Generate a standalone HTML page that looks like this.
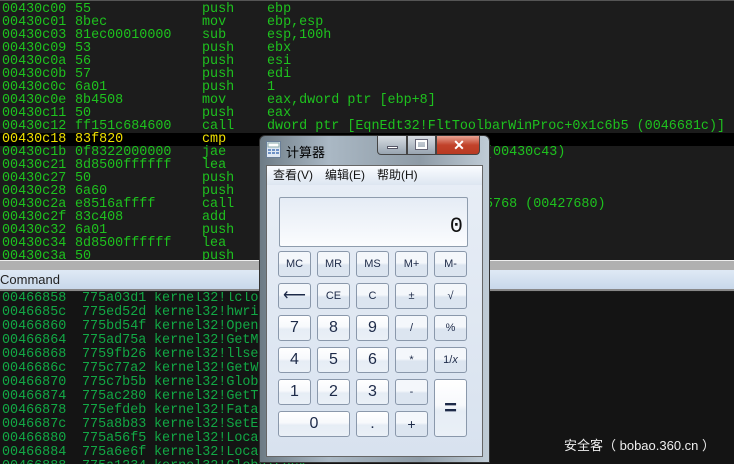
<!DOCTYPE html>
<html style="overflow:hidden;width:734px;height:464px"><head><meta charset="utf-8"><style>
*{margin:0;padding:0;box-sizing:border-box}
body{width:734px;height:464px;overflow:hidden;background:#1a1a1a;position:relative;font-family:"Liberation Mono",monospace}
#top{position:absolute;left:0;top:0;width:734px;height:260px;background:#1c1c1c;border-top:1px solid #555}
.r{position:absolute;left:0;height:13px;width:734px;font-size:13.4px;line-height:13px;color:#1ec21e;white-space:pre}
.r span{position:absolute;top:0}
.hl{background:#000;color:#f0e000}
#sep{position:absolute;left:0;top:260px;width:734px;height:10px;background:#b0b0b0;border-top:1px solid #eee}
#cmd{position:absolute;left:0;top:270px;width:734px;height:21px;background:linear-gradient(#dfe9f5,#c8d8ea);border-bottom:2px solid #888;font-family:"Liberation Sans",sans-serif;font-size:13px;line-height:20px;color:#222}
#bot{position:absolute;left:0;top:292px;width:734px;height:172px;background:#141414;overflow:hidden}
.b{position:absolute;left:0;font-size:13.4px;line-height:14px;color:#12a845;white-space:pre}
.b span{position:absolute;top:0}
#calc{position:absolute;left:259px;top:135px;width:231px;height:328px;border-radius:6px 6px 0 0;background:linear-gradient(90deg,#6d7b85,#aab8c4 30%,#8e9ba6 70%,#c0ccd6);border:1px solid #333}
#ttl{position:absolute;left:26px;top:6px;font-family:"Liberation Sans","Noto Sans CJK SC",sans-serif;font-size:13px;color:#000}
.cap{position:absolute;top:0;height:19px;border:1px solid #444;border-top:none}
#inner{position:absolute;left:6px;top:29px;width:217px;height:292px;background:linear-gradient(#e8eef6,#d8e2ef);border:1px solid #666}
#menu{height:19px;background:linear-gradient(#fafcff,#dde6f1);font-family:"Liberation Sans","Noto Sans CJK SC",sans-serif;font-size:12px;line-height:19px;color:#111;padding-left:6px;word-spacing:0}
#menu span{margin-right:12px}
#disp{position:absolute;left:12px;top:31px;width:189px;height:50px;border:1px solid #8e9cad;border-radius:2px;background:linear-gradient(#e5ecf5,#fbfcfe);font-size:22px;text-align:right;padding-right:4px;line-height:58px;color:#111}
.k{position:absolute;width:33px;height:26px;border:1px solid #8a98ab;border-radius:3px;background:linear-gradient(#f4f7fb 0,#f4f7fb 45%,#dce5f0 55%,#dce5f0);font-family:"Liberation Sans",sans-serif;font-size:11px;color:#1d2a48;text-align:center;line-height:24px}
.n{font-size:16px;background:linear-gradient(#fff 0,#f7f9fc 45%,#e6edf5 55%,#eaf0f7)}
#wm{position:absolute;left:564px;top:435px;font-family:"Liberation Sans","Noto Sans CJK SC",sans-serif;font-size:13px;color:#eee;white-space:pre}
</style></head><body>
<div id="top">
<div class="r" style="top:2px"><span style="left:2px">00430c00</span><span style="left:75px">55</span><span style="left:202px">push</span><span style="left:267px">ebp</span></div>
<div class="r" style="top:15px"><span style="left:2px">00430c01</span><span style="left:75px">8bec</span><span style="left:202px">mov</span><span style="left:267px">ebp,esp</span></div>
<div class="r" style="top:28px"><span style="left:2px">00430c03</span><span style="left:75px">81ec00010000</span><span style="left:202px">sub</span><span style="left:267px">esp,100h</span></div>
<div class="r" style="top:41px"><span style="left:2px">00430c09</span><span style="left:75px">53</span><span style="left:202px">push</span><span style="left:267px">ebx</span></div>
<div class="r" style="top:54px"><span style="left:2px">00430c0a</span><span style="left:75px">56</span><span style="left:202px">push</span><span style="left:267px">esi</span></div>
<div class="r" style="top:67px"><span style="left:2px">00430c0b</span><span style="left:75px">57</span><span style="left:202px">push</span><span style="left:267px">edi</span></div>
<div class="r" style="top:80px"><span style="left:2px">00430c0c</span><span style="left:75px">6a01</span><span style="left:202px">push</span><span style="left:267px">1</span></div>
<div class="r" style="top:93px"><span style="left:2px">00430c0e</span><span style="left:75px">8b4508</span><span style="left:202px">mov</span><span style="left:267px">eax,dword ptr [ebp+8]</span></div>
<div class="r" style="top:106px"><span style="left:2px">00430c11</span><span style="left:75px">50</span><span style="left:202px">push</span><span style="left:267px">eax</span></div>
<div class="r" style="top:119px"><span style="left:2px">00430c12</span><span style="left:75px">ff151c684600</span><span style="left:202px">call</span><span style="left:267px">dword ptr [EqnEdt32!FltToolbarWinProc+0x1c6b5 (0046681c)]</span></div>
<div class="r hl" style="top:132px"><span style="left:2px">00430c18</span><span style="left:75px">83f820</span><span style="left:202px">cmp</span></div>
<div class="r" style="top:145px"><span style="left:2px">00430c1b</span><span style="left:75px">0f8322000000</span><span style="left:202px">jae</span><span style="left:485px">(00430c43)</span></div>
<div class="r" style="top:158px"><span style="left:2px">00430c21</span><span style="left:75px">8d8500ffffff</span><span style="left:202px">lea</span></div>
<div class="r" style="top:171px"><span style="left:2px">00430c27</span><span style="left:75px">50</span><span style="left:202px">push</span></div>
<div class="r" style="top:184px"><span style="left:2px">00430c28</span><span style="left:75px">6a60</span><span style="left:202px">push</span></div>
<div class="r" style="top:197px"><span style="left:2px">00430c2a</span><span style="left:75px">e8516affff</span><span style="left:202px">call</span><span style="left:485px">5768 (00427680)</span></div>
<div class="r" style="top:210px"><span style="left:2px">00430c2f</span><span style="left:75px">83c408</span><span style="left:202px">add</span></div>
<div class="r" style="top:223px"><span style="left:2px">00430c32</span><span style="left:75px">6a01</span><span style="left:202px">push</span></div>
<div class="r" style="top:236px"><span style="left:2px">00430c34</span><span style="left:75px">8d8500ffffff</span><span style="left:202px">lea</span></div>
<div class="r" style="top:249px"><span style="left:2px">00430c3a</span><span style="left:75px">50</span><span style="left:202px">push</span></div>
</div>
<div id="sep"></div>
<div id="cmd">Command</div>
<div id="bot">
<div class="b" style="top:0px"><span style="left:2px">00466858</span><span style="left:82px">775a03d1</span><span style="left:154px">kernel32!lclose</span></div>
<div class="b" style="top:14px"><span style="left:2px">0046685c</span><span style="left:82px">775ed52d</span><span style="left:154px">kernel32!hwrite</span></div>
<div class="b" style="top:28px"><span style="left:2px">00466860</span><span style="left:82px">775bd54f</span><span style="left:154px">kernel32!OpenFile</span></div>
<div class="b" style="top:42px"><span style="left:2px">00466864</span><span style="left:82px">775ad75a</span><span style="left:154px">kernel32!GetModule</span></div>
<div class="b" style="top:56px"><span style="left:2px">00466868</span><span style="left:82px">7759fb26</span><span style="left:154px">kernel32!llseek</span></div>
<div class="b" style="top:70px"><span style="left:2px">0046686c</span><span style="left:82px">775c77a2</span><span style="left:154px">kernel32!GetWindows</span></div>
<div class="b" style="top:84px"><span style="left:2px">00466870</span><span style="left:82px">775c7b5b</span><span style="left:154px">kernel32!GlobalFree</span></div>
<div class="b" style="top:98px"><span style="left:2px">00466874</span><span style="left:82px">775ac280</span><span style="left:154px">kernel32!GetTick</span></div>
<div class="b" style="top:112px"><span style="left:2px">00466878</span><span style="left:82px">775efdeb</span><span style="left:154px">kernel32!FatalExit</span></div>
<div class="b" style="top:126px"><span style="left:2px">0046687c</span><span style="left:82px">775a8b83</span><span style="left:154px">kernel32!SetError</span></div>
<div class="b" style="top:140px"><span style="left:2px">00466880</span><span style="left:82px">775a56f5</span><span style="left:154px">kernel32!LocalFree</span></div>
<div class="b" style="top:154px"><span style="left:2px">00466884</span><span style="left:82px">775a6e6f</span><span style="left:154px">kernel32!LocalAlloc</span></div>
<div class="b" style="top:168px"><span style="left:2px">00466888</span><span style="left:82px">775a1234</span><span style="left:154px">kernel32!GlobalLock</span></div>
</div>
<div id="calc">
<svg style="position:absolute;left:6px;top:5px" width="15" height="17"><rect x="0.5" y="0.5" width="14" height="16" fill="#dfe8f2" stroke="#6a7f98"/><rect x="2" y="2" width="11" height="4" fill="#fff" stroke="#8aa"/><g fill="#6e92c6"><rect x="2" y="8" width="3" height="2"/><rect x="6" y="8" width="3" height="2"/><rect x="10" y="8" width="3" height="2"/><rect x="2" y="11" width="3" height="2"/><rect x="6" y="11" width="3" height="2"/><rect x="10" y="11" width="3" height="2"/></g></svg>
<div id="ttl">计算器</div>
<div class="cap" style="left:117px;width:30px;border-radius:0 0 0 4px;background:linear-gradient(#d8dde3,#98a4b0)"><div style="position:absolute;left:9px;top:10px;width:11px;height:3px;background:#fff;border:1px solid #556"></div></div>
<div class="cap" style="left:147px;width:29px;background:linear-gradient(#d8dde3,#98a4b0)"><div style="position:absolute;left:8px;top:4px;width:11px;height:9px;border:2px solid #fff;outline:1px solid #667"></div></div>
<div class="cap" style="left:176px;width:44px;border-radius:0 0 4px 0;background:linear-gradient(#e8a393,#c2432b 50%,#b83a22)"><div style="position:absolute;left:0;width:44px;top:0;text-align:center;font:bold 14px 'Liberation Sans',sans-serif;color:#fff;line-height:18px">✕</div></div>
<div id="inner">
<div id="menu"><span>查看(V)</span><span>编辑(E)</span><span>帮助(H)</span></div>
<div id="disp">0</div>
<div class="k" style="left:11px;top:85px">MC</div><div class="k" style="left:50px;top:85px">MR</div><div class="k" style="left:89px;top:85px">MS</div><div class="k" style="left:128px;top:85px">M+</div><div class="k" style="left:167px;top:85px">M-</div>
<div class="k" style="left:11px;top:117px;font-size:16px">⟵</div><div class="k" style="left:50px;top:117px">CE</div><div class="k" style="left:89px;top:117px">C</div><div class="k" style="left:128px;top:117px">±</div><div class="k" style="left:167px;top:117px">√</div>
<div class="k n" style="left:11px;top:149px">7</div><div class="k n" style="left:50px;top:149px">8</div><div class="k n" style="left:89px;top:149px">9</div><div class="k" style="left:128px;top:149px">/</div><div class="k" style="left:167px;top:149px">%</div>
<div class="k n" style="left:11px;top:181px">4</div><div class="k n" style="left:50px;top:181px">5</div><div class="k n" style="left:89px;top:181px">6</div><div class="k" style="left:128px;top:181px">*</div><div class="k" style="left:167px;top:181px">1/<i>x</i></div>
<div class="k n" style="left:11px;top:213px">1</div><div class="k n" style="left:50px;top:213px">2</div><div class="k n" style="left:89px;top:213px">3</div><div class="k" style="left:128px;top:213px">-</div>
<div class="k n" style="left:167px;top:213px;height:58px;line-height:56px;font-size:22px;font-weight:bold">=</div>
<div class="k n" style="left:11px;top:245px;width:72px">0</div><div class="k n" style="left:89px;top:245px">.</div><div class="k" style="left:128px;top:245px;font-size:14px">+</div>
</div>
</div>
<div id="wm">安全客（ bobao.360.cn ）</div>
</body></html>
